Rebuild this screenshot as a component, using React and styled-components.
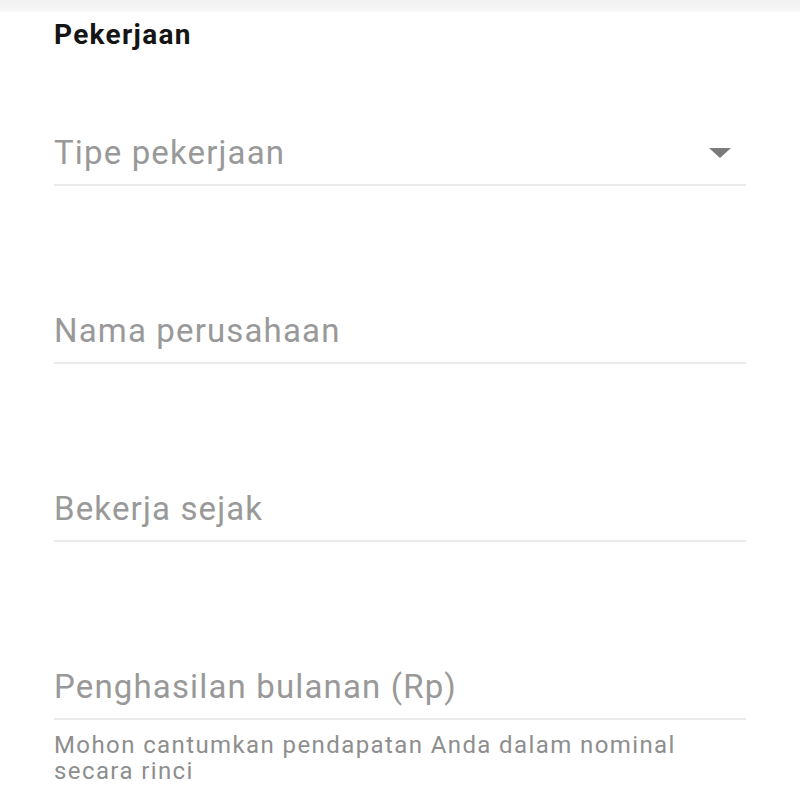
import React from 'react'
import styled, { createGlobalStyle } from 'styled-components'

const GlobalStyle = createGlobalStyle`
    html, body {
        margin: 0;
        padding: 0;
        background: #ffffff;
    }
    body {
        font-family: Roboto, "Noto Sans", "Liberation Sans", sans-serif;
    }
`

const Page = styled.div`
    width: 800px;
    min-height: 800px;
    background: #ffffff;
    overflow: hidden;
`

const TopShade = styled.div`
    height: 12px;
    background: linear-gradient(to bottom, #f1f1f1, #f4f4f4 70%, #fbfbfb);
`

const Section = styled.div`
    padding: 0 54px;
    display: flex;
    flex-direction: column;
`

const Title = styled.h2`
    margin: 7px 0 0;
    font-size: 28px;
    line-height: 32px;
    font-weight: 700;
    letter-spacing: 1.3px;
    color: #151515;
`

const FieldList = styled.div`
    display: flex;
    flex-direction: column;
    gap: 125px;
    margin-top: 82px;
`

const Field = styled.div`
    display: flex;
    align-items: center;
    justify-content: space-between;
    padding-bottom: 11px;
    border-bottom: 2px solid #ebebeb;
`

const Label = styled.span`
    font-size: 33px;
    line-height: 40px;
    letter-spacing: 1.15px;
    color: #999999;
`

const Caret = styled.svg`
    width: 22px;
    height: 10px;
    margin-right: 15px;
    fill: #7b7b7b;
`

const Hint = styled.p`
    margin: 12px 0 0;
    font-size: 24px;
    line-height: 26px;
    letter-spacing: 1.4px;
    color: #8e8e8e;
`

const fields = [
    { label: 'Tipe pekerjaan', select: true },
    { label: 'Nama perusahaan' },
    { label: 'Bekerja sejak' },
    { label: 'Penghasilan bulanan (Rp)' },
]

const App = () => (
    <Page>
        <GlobalStyle />
        <TopShade />
        <Section>
            <Title>Pekerjaan</Title>
            <FieldList>
                {fields.map((f) => (
                    <Field key={f.label}>
                        <Label>{f.label}</Label>
                        {f.select && (
                            <Caret viewBox="0 0 22 10">
                                <path d="M0 0 H22 L11 10 Z" />
                            </Caret>
                        )}
                    </Field>
                ))}
            </FieldList>
            <Hint>Mohon cantumkan pendapatan Anda dalam nominal secara rinci</Hint>
        </Section>
    </Page>
)

export default App
